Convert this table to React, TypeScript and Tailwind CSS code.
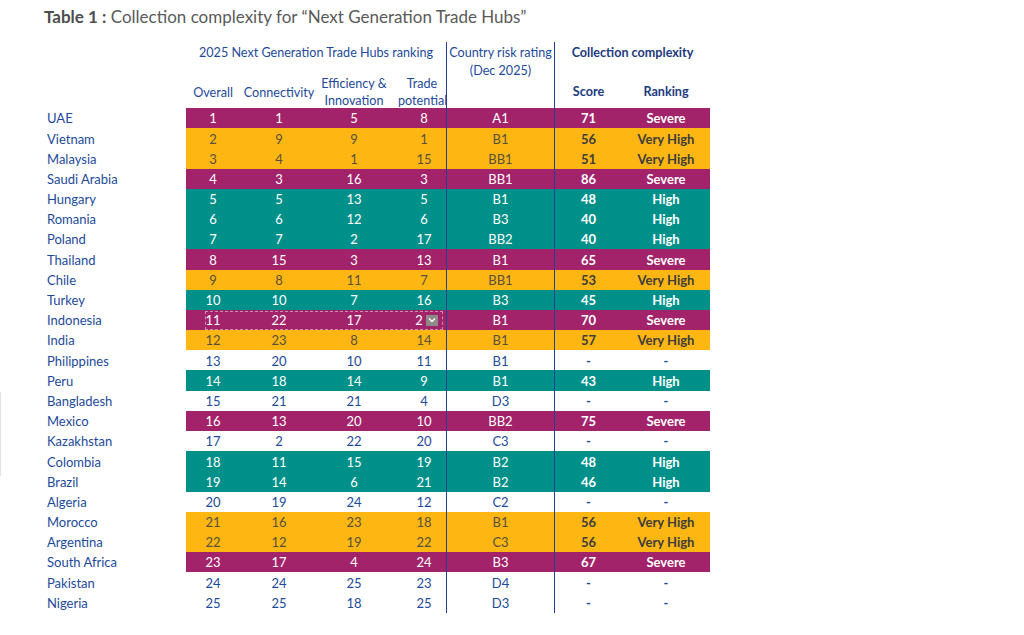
import React from "react";

type Kind = "p" | "o" | "t" | "n";
type Row = { name: string; v: string[]; risk: string; score: string; rank: string; k: Kind };

const rows: Row[] = [
  { name: "UAE", v: ["1", "1", "5", "8"], risk: "A1", score: "71", rank: "Severe", k: "p" },
  { name: "Vietnam", v: ["2", "9", "9", "1"], risk: "B1", score: "56", rank: "Very High", k: "o" },
  { name: "Malaysia", v: ["3", "4", "1", "15"], risk: "BB1", score: "51", rank: "Very High", k: "o" },
  { name: "Saudi Arabia", v: ["4", "3", "16", "3"], risk: "BB1", score: "86", rank: "Severe", k: "p" },
  { name: "Hungary", v: ["5", "5", "13", "5"], risk: "B1", score: "48", rank: "High", k: "t" },
  { name: "Romania", v: ["6", "6", "12", "6"], risk: "B3", score: "40", rank: "High", k: "t" },
  { name: "Poland", v: ["7", "7", "2", "17"], risk: "BB2", score: "40", rank: "High", k: "t" },
  { name: "Thailand", v: ["8", "15", "3", "13"], risk: "B1", score: "65", rank: "Severe", k: "p" },
  { name: "Chile", v: ["9", "8", "11", "7"], risk: "BB1", score: "53", rank: "Very High", k: "o" },
  { name: "Turkey", v: ["10", "10", "7", "16"], risk: "B3", score: "45", rank: "High", k: "t" },
  { name: "Indonesia", v: ["11", "22", "17", "2"], risk: "B1", score: "70", rank: "Severe", k: "p" },
  { name: "India", v: ["12", "23", "8", "14"], risk: "B1", score: "57", rank: "Very High", k: "o" },
  { name: "Philippines", v: ["13", "20", "10", "11"], risk: "B1", score: "-", rank: "-", k: "n" },
  { name: "Peru", v: ["14", "18", "14", "9"], risk: "B1", score: "43", rank: "High", k: "t" },
  { name: "Bangladesh", v: ["15", "21", "21", "4"], risk: "D3", score: "-", rank: "-", k: "n" },
  { name: "Mexico", v: ["16", "13", "20", "10"], risk: "BB2", score: "75", rank: "Severe", k: "p" },
  { name: "Kazakhstan", v: ["17", "2", "22", "20"], risk: "C3", score: "-", rank: "-", k: "n" },
  { name: "Colombia", v: ["18", "11", "15", "19"], risk: "B2", score: "48", rank: "High", k: "t" },
  { name: "Brazil", v: ["19", "14", "6", "21"], risk: "B2", score: "46", rank: "High", k: "t" },
  { name: "Algeria", v: ["20", "19", "24", "12"], risk: "C2", score: "-", rank: "-", k: "n" },
  { name: "Morocco", v: ["21", "16", "23", "18"], risk: "B1", score: "56", rank: "Very High", k: "o" },
  { name: "Argentina", v: ["22", "12", "19", "22"], risk: "C3", score: "56", rank: "Very High", k: "o" },
  { name: "South Africa", v: ["23", "17", "4", "24"], risk: "B3", score: "67", rank: "Severe", k: "p" },
  { name: "Pakistan", v: ["24", "24", "25", "23"], risk: "D4", score: "-", rank: "-", k: "n" },
  { name: "Nigeria", v: ["25", "25", "18", "25"], risk: "D3", score: "-", rank: "-", k: "n" },
];

const bg: Record<Kind, string> = {
  p: "bg-[#a3236b] text-white",
  o: "bg-[#fdb612] text-[#57503f]",
  t: "bg-[#00908a] text-white",
  n: "bg-white text-[#1d4a9a]",
};

const boldTxt: Record<Kind, string> = {
  p: "text-white",
  o: "text-[#3d3d3d]",
  t: "text-white",
  n: "text-[#1d4a9a]",
};

const font = { fontFamily: "Lato, 'Open Sans', 'Liberation Sans', sans-serif" };

export default function App() {
  return (
    <div className="relative w-[1024px] h-[635px] bg-white overflow-hidden" style={font}>
      <div className="absolute left-0 top-[392px] w-px h-[84px] bg-[#e2e2e2]" />
      <div className="pl-[44px] pt-[6px] h-[42px] text-[17px] leading-[22px] text-[#5a5a5a]">
        <span className="font-bold text-[#4d4d4d]">Table 1 :</span> Collection complexity for “Next Generation Trade Hubs”
      </div>

      <div className="pl-[47px] text-[13px]">
        {/* Header */}
        <div className="flex h-[66px] text-[12.6px] text-[#1d4a9a]">
          <div className="w-[139px] shrink-0" />
          <div className="w-[260px] shrink-0 flex flex-col">
            <div className="h-[18px] leading-[18px] pt-[2px] text-center">2025 Next Generation Trade Hubs ranking</div>
            <div className="mt-[14px] h-[34px] pt-[2px] flex items-center leading-[17px]">
              <div className="w-[54px] text-center">Overall</div>
              <div className="w-[78px] text-center">Connectivity</div>
              <div className="w-[72px] text-center">
                Efficiency &amp;
                <br />
                Innovation
              </div>
              <div className="w-[56px] pl-[8px] text-center">
                Trade
                <br />
                potential
              </div>
            </div>
          </div>
          <div className="w-[109px] shrink-0 border-x border-[#25408f] text-center leading-[18px] pt-[2px]">
            Country risk rating
            <br />
            (Dec 2025)
          </div>
          <div className="w-[155px] shrink-0 flex flex-col font-bold text-[#1c3a7e]">
            <div className="h-[18px] leading-[18px] pt-[2px] text-center">Collection complexity</div>
            <div className="mt-[14px] h-[34px] pt-[3px] flex items-center">
              <div className="w-[67px] text-center">Score</div>
              <div className="w-[88px] text-center">Ranking</div>
            </div>
          </div>
        </div>

        {/* Body */}
        {rows.map((r, i) => (
          <div key={r.name} className="relative flex h-[20.2px] items-center">
            <div className="w-[139px] shrink-0 pt-[2px] text-[#1d4a9a]">{r.name}</div>
            <div className={`flex h-full items-center ${bg[r.k]}`}>
              <div className="w-[54px] pt-[2px] text-center">{r.v[0]}</div>
              <div className="w-[78px] pt-[2px] text-center">{r.v[1]}</div>
              <div className="w-[72px] pt-[2px] text-center">{r.v[2]}</div>
              {i === 10 ? (
                <div className="w-[56px] pt-[2px] pl-[2px] text-center">{r.v[3]}</div>
              ) : (
                <div className="w-[56px] pt-[2px] pl-[12px] text-center">{r.v[3]}</div>
              )}
              <div className="w-[109px] h-full pt-[2px] flex items-center justify-center border-x border-[#25408f]">{r.risk}</div>
              <div className={`w-[67px] pt-[2px] text-center font-bold ${boldTxt[r.k]}`}>{r.score}</div>
              <div className={`w-[88px] pt-[2px] text-center font-bold ${boldTxt[r.k]}`}>{r.rank}</div>
            </div>
            {i === 10 && (
              <>
                <div className="absolute left-[158px] top-[1px] w-[238px] h-[19px] border border-dashed border-[#c98fb0]" />
                <div className="absolute left-[379px] top-[5px] w-[12px] h-[11px] bg-[#8e8a8c] flex items-center justify-center">
                  <svg width="8" height="6" viewBox="0 0 8 6">
                    <path d="M1 1.5 L4 4.5 L7 1.5" stroke="white" strokeWidth="1.4" fill="none" />
                  </svg>
                </div>
              </>
            )}
          </div>
        ))}
      </div>
    </div>
  );
}
